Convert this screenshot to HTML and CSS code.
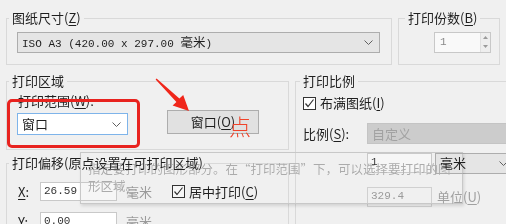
FILE: index.html
```html
<!DOCTYPE html>
<html lang="zh-CN">
<head>
<meta charset="utf-8">
<title>打印</title>
<link rel="stylesheet" href="styles.css">
</head>
<body>
<div class="dialog">
  <div class="row-top">
    <section class="grp paper">
      <div class="grp-title">图纸尺寸(<u>Z</u>)</div>
      <div class="combo combo-ro paper-combo">
        <span class="mono">ISO A3 (420.00 x 297.00 <span class="cjk">毫米</span>)</span>
        <svg class="chev" width="9" height="5" viewBox="0 0 9 5"><polyline points="0.5,0.5 4.5,4.5 8.5,0.5" fill="none" stroke="#606060" stroke-width="1"/></svg>
      </div>
    </section>
    <section class="grp copies">
      <div class="grp-title">打印份数(<u>B</u>)</div>
      <div class="spin">
        <span class="mono spin-val">1</span>
        <div class="spin-btns">
          <svg width="9" height="9" viewBox="0 0 9 9"><polygon points="2,6 7,6 4.5,3" fill="#9a9a9a"/></svg>
          <svg width="9" height="9" viewBox="0 0 9 9"><polygon points="2,3 7,3 4.5,6" fill="#9a9a9a"/></svg>
        </div>
      </div>
    </section>
  </div>

  <div class="row-bottom">
    <div class="col-left">
      <section class="grp area">
        <div class="grp-title">打印区域</div>
        <div class="field-label">打印范围(<u>W</u>):</div>
        <div class="area-row">
          <div class="combo combo-focus area-combo">
            <span>窗口</span>
            <svg class="chev" width="9" height="5" viewBox="0 0 9 5"><polyline points="0.5,0.5 4.5,4.5 8.5,0.5" fill="none" stroke="#606060" stroke-width="1"/></svg>
          </div>
          <button class="btn" type="button">窗口(<u>O</u>)</button>
        </div>
      </section>
      <section class="grp offset">
        <div class="grp-title">打印偏移(原点设置在可打印区域)</div>
        <div class="off-row">
          <span class="axis"><u>X</u>:</span>
          <div class="input mono">26.59</div>
          <span class="unit">毫米</span>
          <span class="check"><svg width="11" height="11" viewBox="0 0 11 11"><polyline points="1.5,5.5 4,8.5 9.5,1.5" fill="none" stroke="#333" stroke-width="1.2"/></svg></span>
          <span>居中打印(<u>C</u>)</span>
        </div>
        <div class="off-row">
          <span class="axis"><u>Y</u>:</span>
          <div class="input mono">0.00</div>
          <span class="unit">毫米</span>
        </div>
      </section>
    </div>

    <section class="grp scale">
      <div class="grp-title">打印比例</div>
      <div class="scale-body">
        <div class="chk-row">
          <span class="check"><svg width="11" height="11" viewBox="0 0 11 11"><polyline points="1.5,5.5 4,8.5 9.5,1.5" fill="none" stroke="#333" stroke-width="1.2"/></svg></span>
          <span>布满图纸(<u>I</u>)</span>
        </div>
        <div class="ratio-row">
          <span class="ratio-label">比例(<u>S</u>):</span>
          <div class="combo combo-dis ratio-combo"><span>自定义</span></div>
        </div>
        <div class="val-row">
          <div class="input mono val-input">1</div>
          <div class="combo combo-ro unit-combo">
            <span>毫米</span>
            <svg class="chev" width="9" height="5" viewBox="0 0 9 5"><polyline points="0.5,0.5 4.5,4.5 8.5,0.5" fill="none" stroke="#606060" stroke-width="1"/></svg>
          </div>
        </div>
        <div class="val-row val-row2">
          <div class="input input-dis mono val-input">329.4</div>
          <span class="unit-label">单位(<u>U</u>)</span>
        </div>
        <div class="val-row val-row3">
          <span class="check check-off"></span>
          <span>缩放线宽(<u>L</u>)</span>
        </div>
      </div>
    </section>
  </div>
</div>

<div class="tooltip">
  <div>指定要打印的图形部分。在“打印范围”下，可以选择要打印的图</div>
  <div class="tip-line2">形区域。</div>
</div>

<div class="redbox"></div>
<svg class="arrow" width="506" height="224" viewBox="0 0 506 224">
  <polygon points="156.6,78.4 179.4,98.6 183.2,95.0 189,111 172.6,105.6 176.4,102.0 155.6,79.6" fill="#f0261a"/>
</svg>
<div class="dian">点</div>
</body>
</html>
```

FILE: styles.css
```css
* { box-sizing: border-box; }

body {
  margin: 0;
  width: 506px;
  height: 224px;
  overflow: hidden;
  position: relative;
  background: #f0f0f0;
  font-family: "Noto Sans CJK SC", "Noto Sans", sans-serif;
  font-size: 13px;
  line-height: 16px;
  color: #1f1f1f;
}

u { text-decoration: underline; text-underline-offset: 2px; }

.mono {
  font-family: "Liberation Mono", "Noto Sans CJK SC", monospace;
  font-size: 11px;
}
.mono .cjk { font-family: "Noto Sans CJK SC", sans-serif; font-size: 12.5px; }

.dialog {
  padding: 18px 0 0 6px;
  width: 620px;
}

.row-top { display: flex; gap: 6px; }

.grp { border: 1px solid #d9d9d9; }

.grp-title {
  width: fit-content;
  margin: -9px 0 0 2px;
  padding: 0 3px;
  background: #f0f0f0;
}

/* combo boxes */
.combo {
  display: flex;
  align-items: center;
  justify-content: space-between;
  padding: 0 6px 0 4px;
  border: 1px solid #adadad;
}
.combo-ro { background: #e5e5e5; }
.combo-focus { background: #fff; border-color: #7eb4ea; }
.combo-dis { background: #cccccc; border-color: #c4c4c4; color: #a2a2a2; }
.chev { flex: none; }

.paper { width: 386px; height: 47px; }
.paper-combo { margin: 6px 0 0 10px; width: 363px; height: 21px; }

.copies { width: 102px; height: 47px; }
.copies .grp-title { margin-left: 6px; }
.spin {
  margin: 6px 0 0 35px;
  width: 57px;
  height: 21px;
  display: flex;
  border: 1px solid #c8c8c8;
  background: #f9f9f9;
}
.spin-val { flex: 1; padding-left: 5px; line-height: 19px; color: #8a8a8a; }
.spin-btns {
  width: 10px;
  display: flex;
  flex-direction: column;
  border-left: 1px solid #e0e0e0;
  background: #eeeeee;
}

.row-bottom { display: flex; gap: 6px; margin-top: 16px; }
.col-left { width: 283px; flex: none; }

.area { height: 69px; }
.field-label { margin: 4px 0 0 11px; }
.area-row { display: flex; align-items: flex-start; }
.area-combo { margin: 4px 0 0 10px; width: 111px; height: 22px; }
.btn {
  margin: 1px 0 0 39px;
  width: 92px;
  height: 24px;
  border: 1px solid #adadad;
  background: #e1e1e1;
  font: inherit;
  color: inherit;
  padding: 0;
}

.offset { margin-top: 13px; height: 90px; }
.off-row {
  display: flex;
  align-items: center;
  height: 19px;
  margin: 11px 0 0 11px;
}
.axis { width: 22px; }
.input {
  width: 77px;
  height: 19px;
  border: 1px solid #c9c9c9;
  background: #fff;
  padding-left: 3px;
  line-height: 17px;
  color: #333;
}
.input-dis { background: #f0f0f0; color: #9a9a9a; border-color: #d0d0d0; }
.unit { margin-left: 9px; width: 26px; color: #9a9a9a; }
.check {
  width: 13px;
  height: 13px;
  flex: none;
  border: 1px solid #333;
  background: #fff;
  margin: 0 4px 0 20px;
  display: flex;
  align-items: center;
  justify-content: center;
}

.scale { flex: 1; height: 200px; }
.scale .grp-title { margin-left: 4px; }
.scale-body { padding-left: 7px; }
.chk-row { display: flex; align-items: center; height: 14px; margin-top: 7px; }
.chk-row .check { margin-left: 0; }
.ratio-row { display: flex; align-items: center; height: 21px; margin-top: 13px; }
.ratio-label { width: 64px; }
.ratio-combo { width: 160px; height: 21px; }
.val-row { display: flex; align-items: center; height: 20px; margin: 9px 0 0 64px; }
.val-row2 { margin-top: 14px; }
.val-row3 { margin-top: 14px; }
.val-row3 .check { margin-left: 0; }
.val-input { width: 65px; height: 20px; }
.unit-combo { margin-left: 3px; width: 80px; height: 21px; }
.unit-label { margin-left: 5px; color: #a0a0a0; }

/* tooltip fading in over the dialog */
.tooltip {
  position: absolute;
  left: 80px;
  top: 152px;
  width: 383px;
  height: 52px;
  padding: 8px 0 0 7px;
  border: 1px solid #c8c8c8;
  background: #f6f6f6;
  box-shadow: 1px 2px 3px rgba(0, 0, 0, 0.12);
  mix-blend-mode: darken;
  color: #ababab;
  font-size: 12.5px;
  line-height: 16px;
  white-space: nowrap;
}
.tip-line2 { margin-top: 1px; }

/* red annotations */
.redbox {
  position: absolute;
  left: 7px;
  top: 99px;
  width: 133px;
  height: 49px;
  border: 3px solid #e8231f;
  border-radius: 5px;
}
.arrow { position: absolute; left: 0; top: 0; }
.dian {
  position: absolute;
  left: 229px;
  top: 112px;
  font-size: 22px;
  line-height: 26px;
  font-weight: 300;
  color: #f0432a;
}
```
